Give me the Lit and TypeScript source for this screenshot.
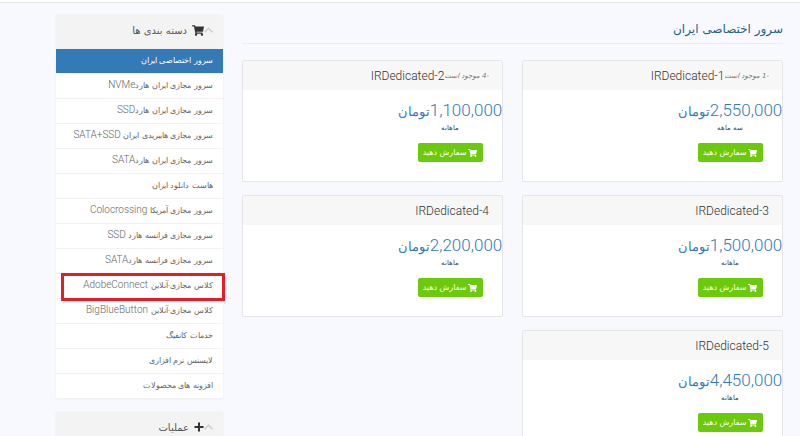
import { LitElement, html, css, svg } from "lit";
import { customElement, property } from "lit/decorators.js";

const cartPath =
  "M528 301l47-208c4-15-8-29-23-29H159l-9-45C148 8 138 0 126 0H24C11 0 0 11 0 24v16c0 13 11 24 24 24h70l70 343c-17 10-28 28-28 49 0 31 25 56 56 56s56-25 56-56c0-16-6-30-17-40h210c-11 10-17 24-17 40 0 31 25 56 56 56s56-25 56-56c0-22-13-41-31-50l5-24c4-15-8-30-23-30H218l-7-32h294c11 0 21-8 23-19z";

const cart = svg`<svg class="icon cart" viewBox="0 0 576 512" aria-hidden="true"><path fill="currentColor" d=${cartPath} /></svg>`;
const plus = svg`<svg class="icon plus" viewBox="0 0 10 10" aria-hidden="true"><path fill="currentColor" d="M4 0.5h2v3.5h3.5v2H6v3.5H4V6H.5V4H4z" /></svg>`;
const chevron = svg`<svg class="icon chevron" viewBox="0 0 10 6" aria-hidden="true"><path fill="none" stroke="currentColor" stroke-width="1.5" d="M.6 5.4L5 1l4.4 4.4" /></svg>`;

const textStyles = css`
  .fa {
    font-family: "DejaVu Sans", sans-serif;
  }
  .icon {
    display: block;
    flex: none;
  }
`;

interface Category {
  fa: string;
  latin?: string;
  active?: boolean;
  marked?: boolean;
}

const categories: Category[] = [
  { fa: "سرور اختصاصی ایران", active: true },
  { fa: "سرور مجازی ایران هارد", latin: "NVMe" },
  { fa: "سرور مجازی ایران هارد", latin: "SSD" },
  { fa: "سرور مجازی هایبریدی ایران ", latin: "SATA+SSD" },
  { fa: "سرور مجازی ایران هارد", latin: "SATA" },
  { fa: "هاست دانلود ایران" },
  { fa: "سرور مجازی آمریکا ", latin: "Colocrossing" },
  { fa: "سرور مجازی فرانسه هارد ", latin: "SSD" },
  { fa: "سرور مجازی فرانسه هارد", latin: "SATA" },
  { fa: "کلاس مجازی-آنلاین ", latin: "AdobeConnect", marked: true },
  { fa: "کلاس مجازی-آنلاین ", latin: "BigBlueButton" },
  { fa: "خدمات کانفیگ" },
  { fa: "لایسنس نرم افزاری" },
  { fa: "افزونه های محصولات" },
];

interface Product {
  name: string;
  stock?: string;
  price: string;
  cycle: string;
}

const products: Product[] = [
  { name: "IRDedicated-1", stock: "-1 موجود است", price: "2,550,000", cycle: "سه ماهه" },
  { name: "IRDedicated-2", stock: "-4 موجود است", price: "1,100,000", cycle: "ماهانه" },
  { name: "IRDedicated-3", price: "1,500,000", cycle: "ماهانه" },
  { name: "IRDedicated-4", price: "2,200,000", cycle: "ماهانه" },
  { name: "IRDedicated-5", price: "4,450,000", cycle: "ماهانه" },
];

@customElement("product-card")
export class ProductCard extends LitElement {
  @property({ attribute: false }) product!: Product;

  static styles = [
    textStyles,
    css`
      :host {
        display: block;
        box-sizing: border-box;
        min-height: 122px;
        border: 1px solid #e6e6ea;
        border-radius: 2px;
        background: #fff;
        padding-bottom: 18px;
      }
      .head {
        display: flex;
        align-items: center;
        height: 29px;
        padding: 0 13px;
        background: #f7f7f7;
      }
      .name {
        margin: 0;
        font-size: 12px;
        font-weight: 300;
        color: #333;
      }
      .stock {
        font-size: 7px;
        font-style: italic;
        color: #777;
      }
      .pricing {
        display: flex;
        flex-direction: column;
        align-items: center;
        width: 104px;
        padding-top: 8px;
      }
      .price {
        display: flex;
        align-items: baseline;
        height: 24px;
        font-size: 17px;
        line-height: 24px;
        color: #337ab7;
        white-space: nowrap;
      }
      .price .fa {
        font-size: 13px;
      }
      .cycle {
        font-size: 7px;
        line-height: 12px;
        color: #444;
      }
      .order {
        display: flex;
        align-items: center;
        justify-content: center;
        gap: 2px;
        width: 65px;
        height: 19px;
        margin: 9px 0 0;
        padding: 0;
        border: 0;
        border-radius: 2px;
        background: #6cca0c;
        color: #fff;
        font-size: 8px;
        white-space: nowrap;
        cursor: pointer;
      }
      .cart {
        width: 9px;
        height: 8px;
      }
    `,
  ];

  render() {
    const p = this.product;
    return html`
      <header class="head">
        ${p.stock ? html`<span class="stock fa">${p.stock}</span>` : null}
        <h2 class="name" dir="ltr">${p.name}</h2>
      </header>
      <div class="pricing">
        <div class="price"><span>${p.price}</span><span class="fa">تومان</span></div>
        <div class="cycle fa">${p.cycle}</div>
        <button class="order fa" type="button">${cart}<span>سفارش دهید</span></button>
      </div>
    `;
  }
}

@customElement("app-root")
export class AppRoot extends LitElement {
  static styles = [
    textStyles,
    css`
      :host {
        display: block;
        box-sizing: border-box;
        height: 100vh;
        overflow: hidden;
        border-top: 2px solid #fdfdfd;
        background: #f8f8ff;
        font-family: Roboto, "DejaVu Sans", sans-serif;
        font-weight: 300;
        direction: rtl;
      }
      .page {
        display: grid;
        grid-template-columns: minmax(0, 1fr) 167px;
        gap: 19px;
        padding: 12px 17px 0 56px;
        border-top: 1px solid #e7e7e7;
      }
      .title {
        margin: 0 0 16px;
        height: 28px;
        border-bottom: 1px solid #ececf2;
        font-size: 12px;
        line-height: 28px;
        font-weight: 400;
        color: #1f618d;
      }
      .cards {
        display: grid;
        grid-template-columns: 1fr 1fr;
        gap: 13px 19px;
      }
      .side {
        display: flex;
        flex-direction: column;
        gap: 13px;
      }
      .panel {
        border-radius: 2px;
        box-shadow: 0 0 1px #ccc;
        background: #fff;
      }
      .panel-head {
        box-sizing: border-box;
        display: flex;
        align-items: center;
        height: 34px;
        padding: 0 10px 4px;
        background: #f3f3f3;
        color: #333;
      }
      .panel-title {
        margin: 0 5px 0 0;
        font-size: 10px;
        font-weight: 400;
        color: #555;
      }
      .toggle {
        padding: 0;
        border: 0;
        background: none;
        color: #ccc;
        cursor: pointer;
      }
      .chevron {
        width: 9px;
        height: 6px;
      }
      .cart {
        width: 12px;
        height: 11px;
      }
      .plus {
        width: 10px;
        height: 10px;
      }
      .list {
        margin: 0;
        padding: 0;
        list-style: none;
      }
      .item {
        position: relative;
        box-sizing: border-box;
        height: 25px;
        border-bottom: 1px solid #f2f2f2;
      }
      .link {
        display: block;
        padding: 0 10px;
        font-size: 10px;
        line-height: 22px;
        color: #666;
        text-decoration: none;
        white-space: nowrap;
      }
      .link .fa {
        font-size: 8px;
      }
      .active {
        background: #337ab7;
      }
      .active .link {
        color: #fff;
      }
      .marked::after {
        content: "";
        position: absolute;
        inset: -1px -2px -3px 5px;
        border: 3px solid #e81c24;
        pointer-events: none;
      }
    `,
  ];

  render() {
    return html`
      <div class="page">
        <main>
          <h1 class="title fa">سرور اختصاصی ایران</h1>
          <div class="cards">
            ${products.map((p) => html`<product-card .product=${p}></product-card>`)}
          </div>
        </main>
        <aside class="side">
          <nav class="panel" aria-label="دسته بندی ها">
            <header class="panel-head">
              <button class="toggle" type="button" aria-label="بستن">${chevron}</button>
              ${cart}
              <h2 class="panel-title fa">دسته بندی ها</h2>
            </header>
            <ul class="list">
              ${categories.map(
                (c) => html`<li class="item ${c.active ? "active" : ""} ${c.marked ? "marked" : ""}">
                  <a class="link" href="#"><span class="fa">${c.fa}</span>${c.latin ?? ""}</a>
                </li>`
              )}
            </ul>
          </nav>
          <section class="panel">
            <header class="panel-head">
              <button class="toggle" type="button" aria-label="بستن">${chevron}</button>
              ${plus}
              <h2 class="panel-title fa">عملیات</h2>
            </header>
          </section>
        </aside>
      </div>
    `;
  }
}
